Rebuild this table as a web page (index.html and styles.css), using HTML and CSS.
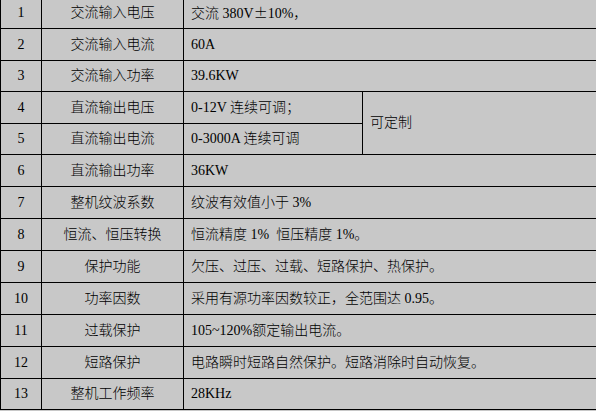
FILE: index.html
```html
<!DOCTYPE html>
<html>
<head>
<meta charset="utf-8">
<link rel="stylesheet" href="styles.css">
</head>
<body>
<div class="frame">
<table class="spec">
  <colgroup>
    <col class="c-no"><col class="c-name"><col class="c-val"><col class="c-extra">
  </colgroup>
  <tr class="r1"><td class="no">1</td><td class="name">交流输入电压</td><td class="val" colspan="2">交流 380V<span class="cjk">±</span>10%，</td></tr>
  <tr class="r2"><td class="no">2</td><td class="name">交流输入电流</td><td class="val" colspan="2">60A</td></tr>
  <tr class="r3"><td class="no">3</td><td class="name">交流输入功率</td><td class="val" colspan="2">39.6KW</td></tr>
  <tr class="r4"><td class="no">4</td><td class="name">直流输出电压</td><td class="val">0-12V 连续可调；</td><td class="val extra" rowspan="2">可定制</td></tr>
  <tr class="r5"><td class="no">5</td><td class="name">直流输出电流</td><td class="val">0-3000A 连续可调</td></tr>
  <tr class="r6"><td class="no">6</td><td class="name">直流输出功率</td><td class="val" colspan="2">36KW</td></tr>
  <tr class="r7"><td class="no">7</td><td class="name">整机纹波系数</td><td class="val" colspan="2">纹波有效值小于 3%</td></tr>
  <tr class="r8"><td class="no">8</td><td class="name">恒流、恒压转换</td><td class="val" colspan="2">恒流精度 1%&nbsp; 恒压精度 1%。</td></tr>
  <tr class="r9"><td class="no">9</td><td class="name">保护功能</td><td class="val" colspan="2">欠压、过压、过载、短路保护、热保护。</td></tr>
  <tr class="r10"><td class="no">10</td><td class="name">功率因数</td><td class="val" colspan="2">采用有源功率因数较正，全范围达 0.95。</td></tr>
  <tr class="r11"><td class="no">11</td><td class="name">过载保护</td><td class="val" colspan="2">105~120%额定输出电流。</td></tr>
  <tr class="r12"><td class="no">12</td><td class="name">短路保护</td><td class="val" colspan="2">电路瞬时短路自然保护。短路消除时自动恢复。</td></tr>
  <tr class="r13"><td class="no">13</td><td class="name">整机工作频率</td><td class="val" colspan="2">28KHz</td></tr>
</table>
</div>
</body>
</html>
```
FILE: styles.css
```css
html, body {
  margin: 0;
  padding: 0;
  background: #c8c8c8;
  overflow: hidden;
}
.frame {
  width: 596px;
  height: 411px;
  overflow: hidden;
}
.spec {
  border-collapse: collapse;
  table-layout: fixed;
  width: 598px;
  margin-top: -4px;
  font-family: "Liberation Serif", "Noto Sans CJK SC", serif;
  font-size: 14px;
  font-weight: 300;
  color: #000;
  background: #c8c8c8;
}
.c-no { width: 41px; }
.c-name { width: 142px; }
.c-val { width: 179px; }
.c-extra { width: 236px; }
.spec td {
  border: 1px solid #000;
  padding: 0;
  height: 31px;
  line-height: 18px;
  white-space: nowrap;
  overflow: hidden;
}
.spec .no, .spec .name { text-align: center; }
.spec .val { text-align: left; padding-left: 7px; }
.spec .r3 td, .spec .r5 td, .spec .r13 td { height: 30px; }
.cjk { font-family: "Noto Sans CJK SC", sans-serif; }
```
